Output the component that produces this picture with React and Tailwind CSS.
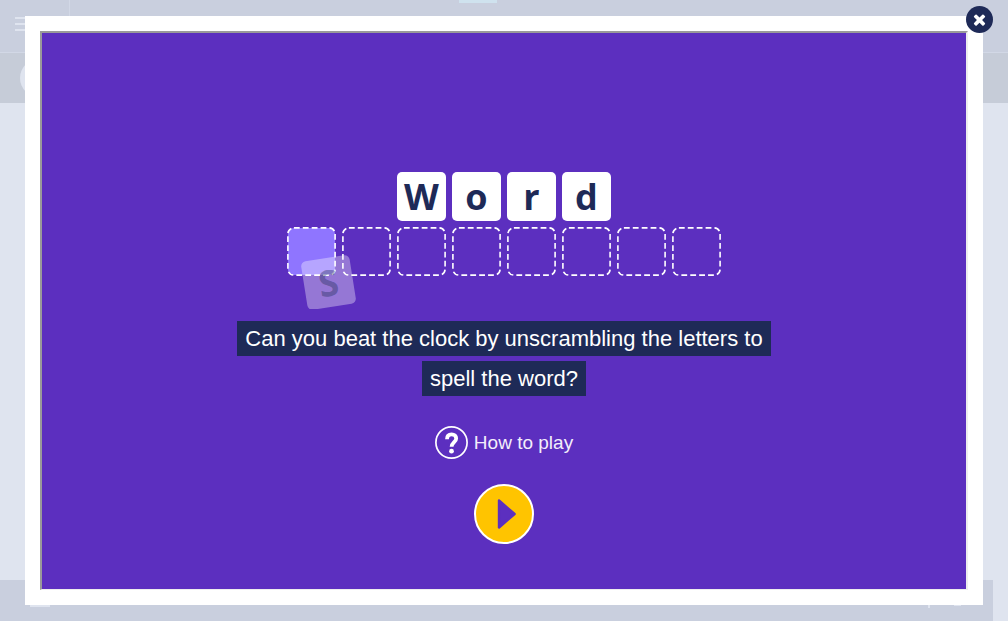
const WORD = ['W', 'o', 'r', 'd'];
const SLOTS = [true, false, false, false, false, false, false, false];

function PageBackdrop() {
  return (
    <div aria-hidden="true" className="absolute inset-0 flex flex-col overflow-hidden bg-[#dfe4ef]">
      <div className="flex h-[53px] border-b border-[#d2d8e6] bg-[#c9cfde]">
        <div className="flex w-[70px] flex-col gap-1 border-r border-[#d2d8e6] pt-[17px] pl-[15px]">
          <span className="h-0.5 w-5 bg-[#dfe4ef]" />
          <span className="h-0.5 w-5 bg-[#dfe4ef]" />
          <span className="h-0.5 w-5 bg-[#dfe4ef]" />
        </div>
        <div className="ml-[389px] h-[3px] w-[38px] bg-[#cfe2ee]" />
      </div>
      <div className="flex h-[50px] items-center bg-[#c6ccd8] pl-5">
        <span className="size-[38px] rounded-full bg-[#dfe4ef]" />
      </div>
      <div className="mt-auto mr-[15px] flex h-[41px] items-start bg-[#c9cfde] pt-[25px] pl-[30px]">
        <span className="h-0.5 w-5 bg-[#dfe4ef]" />
        <span className="mr-6 ml-auto h-[3px] w-0.5 bg-[#dfe4ef]" />
        <span className="mr-8 h-px w-[7px] bg-[#dfe4ef]" />
      </div>
    </div>
  );
}

function Slot({ filled }) {
  return (
    <svg className="size-[49px]" viewBox="0 0 49 49">
      <rect
        x="0.9"
        y="0.9"
        width="47.2"
        height="47.2"
        rx="6"
        fill={filled ? '#8f75ff' : 'none'}
        stroke="#fff"
        strokeWidth="1.6"
        strokeDasharray="5.8 3.1"
      />
    </svg>
  );
}

function WordTiles() {
  return (
    <div className="relative flex h-[137px] flex-col items-center gap-1.5 overflow-hidden font-['Open_Sans',sans-serif] text-4xl font-bold">
      <div className="flex gap-1.5">
        {WORD.map((letter) => (
          <span
            key={letter}
            className="flex size-[49px] items-center justify-center rounded-[5px] bg-white leading-[48px] text-[#1e2a57]"
          >
            {letter}
          </span>
        ))}
      </div>
      <div className="flex gap-1.5">
        {SLOTS.map((filled, i) => (
          <Slot key={i} filled={filled} />
        ))}
      </div>
      <span className="absolute top-[86px] left-[17px] flex size-[49px] -rotate-9 items-center justify-center rounded-[5px] bg-white/35 text-[#1e2a57]/40">
        S
      </span>
    </div>
  );
}

function HelpIcon() {
  return (
    <svg className="size-[33px]" viewBox="0 0 33 33" fill="none" aria-hidden="true">
      <circle cx="16.5" cy="16.5" r="15.6" stroke="#fff" strokeWidth="1.7" />
      <path
        d="M12 13.2C12 10 13.8 8.4 16.6 8.4C19.4 8.4 21.2 10 21.2 12.4C21.2 16 16.6 16.2 16.6 20.8"
        stroke="#fff"
        strokeWidth="3.8"
      />
      <circle cx="16.5" cy="25.2" r="2.4" fill="#fff" />
    </svg>
  );
}

export default function App() {
  return (
    <div className="relative flex min-h-screen flex-col px-[25px] py-4 font-['Liberation_Sans',Arial,sans-serif]">
      <PageBackdrop />
      <div role="dialog" aria-label="Word game" className="relative flex flex-1 flex-col bg-white p-[15px]">
        <main className="flex flex-1 flex-col items-center border-2 border-b border-t-[#9a9a9a] border-r-[#eee] border-b-[#eee] border-l-[#9a9a9a] bg-[#5c2fbf] bg-clip-padding pt-[139px] pb-11">
          <WordTiles />
          <p className="mt-2.5 max-w-[560px] text-center text-[22px] leading-10 text-white">
            <span className="bg-[#1e2a57] box-decoration-clone px-2 py-[5px]">
              Can you beat the clock by unscrambling the letters to spell the word?
            </span>
          </p>
          <button type="button" className="mt-[27px] flex items-center gap-1.5 text-[19px] leading-8 text-[#f3eefb]">
            <HelpIcon />
            How to play
          </button>
          <button
            type="button"
            aria-label="Play"
            className="mt-[25px] flex size-[60px] items-center justify-center rounded-full border-2 border-white bg-[#ffc400]"
          >
            <svg className="size-14" viewBox="0 0 56 56" aria-hidden="true">
              <path
                d="M23 14.5L38.6 28L23 41.5Z"
                fill="#5c2fbf"
                stroke="#5c2fbf"
                strokeWidth="2.4"
                strokeLinejoin="round"
              />
            </svg>
          </button>
        </main>
        <button
          type="button"
          aria-label="Close"
          className="absolute -top-2.5 -right-2.5 flex size-[27px] items-center justify-center rounded-full bg-[#1e2a57] text-white"
        >
          <svg className="size-[17px]" viewBox="0 0 1792 1792" fill="currentColor" aria-hidden="true">
            <path d="M1490 1322q0 40-28 68l-136 136q-28 28-68 28t-68-28l-294-294-294 294q-28 28-68 28t-68-28l-136-136q-28-28-28-68t28-68l294-294-294-294q-28-28-28-68t28-68l136-136q28-28 68-28t68 28l294 294 294-294q28-28 68-28t68 28l136 136q28 28 28 68t-28 68l-294 294 294 294q28 28 28 68z" />
          </svg>
        </button>
      </div>
    </div>
  );
}
